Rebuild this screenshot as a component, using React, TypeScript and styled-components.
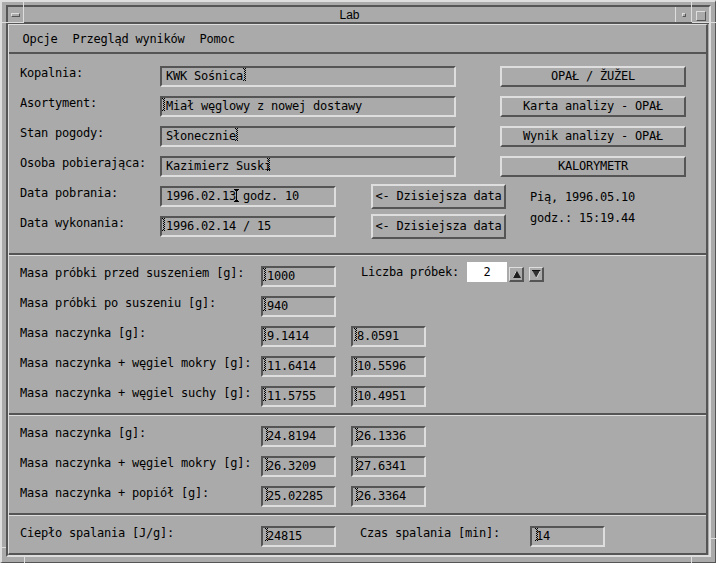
import React from "react";
import styled, { createGlobalStyle, css } from "styled-components";

const BG = "#aaaaaa";
const LIGHT = "#dedede";
const DARK = "#555555";
const MONO = `"DejaVu Sans Mono", "Liberation Mono", monospace`;

const GlobalStyle = createGlobalStyle`
  html, body { margin: 0; padding: 0; background: ${BG}; }
  body { font-family: ${MONO}; font-size: 12px; letter-spacing: -0.22px; color: #000; }
`;

const raised = css`
  border-style: solid;
  border-color: ${LIGHT} ${DARK} ${DARK} ${LIGHT};
`;
const sunken = css`
  border-style: solid;
  border-color: ${DARK} ${LIGHT} ${LIGHT} ${DARK};
`;

const Frame = styled.div`
  position: relative;
  width: 716px;
  height: 563px;
  box-sizing: border-box;
  background: ${BG};
  ${raised};
  border-width: 2px 1px 1px 2px;
  padding: 3px 4px 5px 4px;
`;

const CornerMark = styled.div<{ $x: number; $y: number; $w: number; $h: number }>`
  position: absolute;
  left: ${(p) => p.$x - 2}px;
  top: ${(p) => p.$y - 2}px;
  width: ${(p) => p.$w}px;
  height: ${(p) => p.$h}px;
  background: ${LIGHT};
`;

const Inner = styled.div`
  height: 100%;
  box-sizing: border-box;
  ${sunken};
  border-width: 2px;
  display: flex;
  flex-direction: column;
`;

const TitleBar = styled.div`
  display: flex;
  flex: none;
  height: 17px;
  box-sizing: border-box;
  border-bottom: 2px solid ${DARK};
`;

const WinBox = styled.div<{ $w: number; $left?: boolean; $right?: boolean }>`
  flex: none;
  width: ${(p) => p.$w}px;
  box-sizing: border-box;
  display: flex;
  align-items: center;
  justify-content: center;
  border-left: ${(p) => (p.$left ? `1px solid ${LIGHT}` : "none")};
  border-right: ${(p) => (p.$right ? `1px solid ${LIGHT}` : "none")};
`;

const WinIcon = styled.span<{ $w: number; $h: number; $dy?: number }>`
  display: block;
  width: ${(p) => p.$w}px;
  height: ${(p) => p.$h}px;
  box-sizing: border-box;
  ${raised};
  border-width: 1px;
  margin-top: ${(p) => p.$dy ?? 0}px;
`;

const Title = styled.div`
  flex: 1;
  text-align: center;
  font-family: "Liberation Sans", Arial, sans-serif;
  font-size: 12px;
  letter-spacing: 0;
  line-height: 13px;
  padding-top: 2px;
`;

const Client = styled.div`
  flex: 1;
  margin-right: 1px;
  box-sizing: border-box;
  border-style: solid;
  border-width: 1px 2px 2px 1px;
  border-color: ${LIGHT} ${DARK} ${DARK} ${LIGHT};
  display: flex;
  flex-direction: column;
`;

const MenuBar = styled.div`
  display: flex;
  flex: none;
  height: 29px;
  box-sizing: border-box;
  border-bottom: 2px solid ${DARK};
  padding-left: 6px;
`;

const MenuItem = styled.div`
  padding: 2px 7.5px 0 7.5px;
  height: 27px;
  box-sizing: border-box;
  line-height: 25px;
  white-space: pre;
`;

const Section = styled.div<{ $top: number; $bottom: number }>`
  display: flex;
  flex-direction: column;
  gap: 9px;
  padding: ${(p) => p.$top}px 11px ${(p) => p.$bottom}px 11px;
`;

const Separator = styled.div`
  height: 3px;
  box-sizing: border-box;
  border-top: 2px solid ${DARK};
  border-bottom: 1px solid ${LIGHT};
`;

const Row = styled.div`
  display: flex;
  align-items: flex-start;
  height: 21px;
`;

const Label = styled.div<{ $w: number; $ml?: number }>`
  flex: none;
  width: ${(p) => p.$w}px;
  margin-left: ${(p) => p.$ml ?? 0}px;
  line-height: 14px;
  white-space: pre;
`;

const FieldBox = styled.div<{ $w: number; $ml?: number }>`
  position: relative;
  flex: none;
  width: ${(p) => p.$w}px;
  height: 21px;
  margin-left: ${(p) => p.$ml ?? 0}px;
  box-sizing: border-box;
  ${sunken};
  border-width: 2px;
  padding: 0 4px;
  line-height: 17px;
  white-space: pre;
`;

const CaretAnchor = styled.span`
  display: inline-block;
  width: 0;
  height: 0;
`;

const CaretMark = styled.svg<{ $dx: number; $top: number }>`
  position: absolute;
  top: ${(p) => p.$top}px;
  margin-left: ${(p) => p.$dx}px;
  shape-rendering: crispEdges;
`;

const dottedPixels: [number, number][] = [];
for (let y = 0; y < 13; y++) {
  for (let x = 0; x < 4; x++) {
    const inShape = y === 0 || y === 12 || x === 1 || x === 2;
    if (inShape && (x + y) % 2 === 0) dottedPixels.push([x, y]);
  }
}

const Caret: React.FC<{ dx: number; solid?: boolean }> = ({ dx, solid }) => (
  <CaretAnchor>
    {solid ? (
      <CaretMark $dx={dx} $top={1} width={5} height={13} viewBox="0 0 5 13">
        <rect x={0} y={0} width={5} height={1} fill="#000" />
        <rect x={1} y={1} width={3} height={1} fill="#000" />
        <rect x={2} y={0} width={1} height={13} fill="#000" />
        <rect x={1} y={11} width={3} height={1} fill="#000" />
        <rect x={0} y={12} width={5} height={1} fill="#000" />
      </CaretMark>
    ) : (
      <CaretMark $dx={dx} $top={0} width={4} height={13} viewBox="0 0 4 13">
        {dottedPixels.map(([x, y]) => (
          <rect key={`${x}-${y}`} x={x} y={y} width={1} height={1} fill="#000" />
        ))}
      </CaretMark>
    )}
  </CaretAnchor>
);

type FieldProps = {
  w: number;
  value: string;
  caretAt?: number;
  dx?: number;
  solid?: boolean;
  ml?: number;
};

const TextField: React.FC<FieldProps> = ({ w, value, caretAt, dx = 0, solid, ml }) => {
  if (caretAt === undefined) {
    return (
      <FieldBox $w={w} $ml={ml}>
        {value}
      </FieldBox>
    );
  }
  return (
    <FieldBox $w={w} $ml={ml}>
      {value.slice(0, caretAt)}
      <Caret dx={dx} solid={solid} />
      {value.slice(caretAt)}
    </FieldBox>
  );
};

const PushButton = styled.button<{ $w: number; $h: number; $ml: number }>`
  flex: none;
  width: ${(p) => p.$w}px;
  height: ${(p) => p.$h}px;
  margin: ${(p) => (p.$h > 21 ? (21 - p.$h) / 2 : 0)}px 0 ${(p) => (p.$h > 21 ? (21 - p.$h) / 2 : 0)}px
    ${(p) => p.$ml}px;
  box-sizing: border-box;
  ${raised};
  border-width: 2px;
  background: ${BG};
  padding: 0;
  font-family: ${MONO};
  font-size: 12px;
  letter-spacing: -0.22px;
  line-height: ${(p) => p.$h - 4}px;
  color: #000;
  text-align: center;
  white-space: pre;
  cursor: default;
`;

const DateBlock = styled.div`
  display: flex;
  align-items: flex-start;
`;

const DateRows = styled.div`
  display: flex;
  flex-direction: column;
  gap: 9px;
`;

const Clock = styled.div`
  margin: 1px 0 0 24px;
  line-height: 21px;
  white-space: pre;
`;

const SpinGroup = styled.div`
  display: flex;
  align-items: flex-start;
  height: 20px;
  margin: -4px 0 0 25px;
`;

const SpinLabel = styled.div`
  line-height: 20px;
  white-space: pre;
`;

const SpinValue = styled.div`
  width: 40px;
  height: 20px;
  margin-left: 8px;
  background: #ffffff;
  line-height: 20px;
  text-align: center;
`;

const SpinButton = styled.div<{ $ml: number }>`
  width: 15px;
  height: 15px;
  margin: 5px 0 0 ${(p) => p.$ml}px;
  box-sizing: border-box;
  ${raised};
  border-width: 1px 2px 2px 1px;
  display: flex;
  align-items: center;
  justify-content: center;
`;

const topRows = [
  { label: "Kopalnia:", value: "KWK Sośnica", caretAt: 11, dx: 0, button: "OPAŁ / ŽUŽEL" },
  { label: "Asortyment:", value: "Miał węglowy z nowej dostawy", caretAt: 0, dx: -4, button: "Karta analizy - OPAŁ" },
  { label: "Stan pogody:", value: "Słonecznie", caretAt: 10, dx: -1, button: "Wynik analizy - OPAŁ" },
  { label: "Osoba pobierająca:", value: "Kazimierz Suski", caretAt: 15, dx: -4, button: "KALORYMETR" },
];

const dryRows: { label: string; a: string; b?: string }[] = [
  { label: "Masa próbki po suszeniu [g]:", a: "940" },
  { label: "Masa naczynka [g]:", a: "9.1414", b: "8.0591" },
  { label: "Masa naczynka + węgiel mokry [g]:", a: "11.6414", b: "10.5596" },
  { label: "Masa naczynka + węgiel suchy [g]:", a: "11.5755", b: "10.4951" },
];

const ashRows = [
  { label: "Masa naczynka [g]:", a: "24.8194", b: "26.1336" },
  { label: "Masa naczynka + węgiel mokry [g]:", a: "26.3209", b: "27.6341" },
  { label: "Masa naczynka + popiół [g]:", a: "25.02285", b: "26.3364" },
];

export default function App() {
  return (
    <>
      <GlobalStyle />
      <Frame>
        <Inner>
          <TitleBar>
            <WinBox $w={16} $right>
              <WinIcon $w={9} $h={4} />
            </WinBox>
            <Title>Lab</Title>
            <WinBox $w={17} $left $right>
              <WinIcon $w={4} $h={4} $dy={1} />
            </WinBox>
            <WinBox $w={17}>
              <WinIcon $w={10} $h={10} $dy={2} />
            </WinBox>
          </TitleBar>
          <Client>
            <MenuBar>
              <MenuItem>Opcje</MenuItem>
              <MenuItem>Przegląd wyników</MenuItem>
              <MenuItem>Pomoc</MenuItem>
            </MenuBar>

            <Section $top={12} $bottom={16}>
              {topRows.map((r) => (
                <Row key={r.label}>
                  <Label $w={140}>{r.label}</Label>
                  <TextField w={296} value={r.value} caretAt={r.caretAt} dx={r.dx} />
                  <PushButton $w={186} $h={21} $ml={44}>
                    {r.button}
                  </PushButton>
                </Row>
              ))}
              <DateBlock>
                <DateRows>
                  <Row>
                    <Label $w={140}>Data pobrania:</Label>
                    <TextField w={176} value="1996.02.13 godz. 10" caretAt={10} dx={-2} solid />
                    <PushButton $w={135} $h={25} $ml={35}>
                      {"<- Dzisiejsza data"}
                    </PushButton>
                  </Row>
                  <Row>
                    <Label $w={140}>Data wykonania:</Label>
                    <TextField w={176} value="1996.02.14 / 15" caretAt={0} dx={-4} />
                    <PushButton $w={135} $h={25} $ml={35}>
                      {"<- Dzisiejsza data"}
                    </PushButton>
                  </Row>
                </DateRows>
                <Clock>
                  {"Pią, 1996.05.10"}
                  <br />
                  {"godz.: 15:19.44"}
                </Clock>
              </DateBlock>
            </Section>

            <Separator />

            <Section $top={10} $bottom={6}>
              <Row>
                <Label $w={241}>Masa próbki przed suszeniem [g]:</Label>
                <TextField w={75} value="1000" caretAt={0} dx={-4} />
                <SpinGroup>
                  <SpinLabel>Liczba próbek:</SpinLabel>
                  <SpinValue>2</SpinValue>
                  <SpinButton $ml={2}>
                    <svg width={9} height={8} viewBox="0 0 9 8">
                      <polygon points="4.5,0 9,8 0,8" fill="#1e1e1e" />
                      <line x1={0.5} y1={8} x2={4.5} y2={0.5} stroke={LIGHT} strokeWidth={1} />
                    </svg>
                  </SpinButton>
                  <SpinButton $ml={5}>
                    <svg width={9} height={8} viewBox="0 0 9 8">
                      <polygon points="0,0 9,0 4.5,8" fill="#333333" />
                      <line x1={0} y1={0.5} x2={9} y2={0.5} stroke="#111111" strokeWidth={1} />
                      <line x1={8.5} y1={0.5} x2={4.5} y2={8} stroke={LIGHT} strokeWidth={1} />
                    </svg>
                  </SpinButton>
                </SpinGroup>
              </Row>
              {dryRows.map((r) => (
                <Row key={r.label}>
                  <Label $w={241}>{r.label}</Label>
                  <TextField w={75} value={r.a} caretAt={0} dx={-4} />
                  {r.b !== undefined && <TextField w={75} ml={15} value={r.b} caretAt={0} dx={-3} />}
                </Row>
              ))}
            </Section>

            <Separator />

            <Section $top={10} $bottom={6}>
              {ashRows.map((r) => (
                <Row key={r.label}>
                  <Label $w={241}>{r.label}</Label>
                  <TextField w={75} value={r.a} caretAt={0} dx={-2} />
                  <TextField w={75} ml={15} value={r.b} caretAt={0} dx={-2} />
                </Row>
              ))}
            </Section>

            <Separator />

            <Section $top={10} $bottom={6}>
              <Row>
                <Label $w={241}>Ciepło spalania [J/g]:</Label>
                <TextField w={75} value="24815" caretAt={0} dx={-2} />
                <Label $w={170} $ml={24}>
                  Czas spalania [min]:
                </Label>
                <TextField w={75} value="14" caretAt={0} dx={-1} />
              </Row>
            </Section>
          </Client>
        </Inner>
        <CornerMark $x={23} $y={0} $w={1} $h={22} />
        <CornerMark $x={0} $y={22} $w={24} $h={1} />
        <CornerMark $x={691} $y={0} $w={1} $h={22} />
        <CornerMark $x={692} $y={22} $w={24} $h={1} />
        <CornerMark $x={0} $y={547} $w={6} $h={1} />
        <CornerMark $x={24} $y={555} $w={1} $h={8} />
        <CornerMark $x={691} $y={555} $w={1} $h={8} />
        <CornerMark $x={710} $y={538} $w={6} $h={1} />
      </Frame>
    </>
  );
}
